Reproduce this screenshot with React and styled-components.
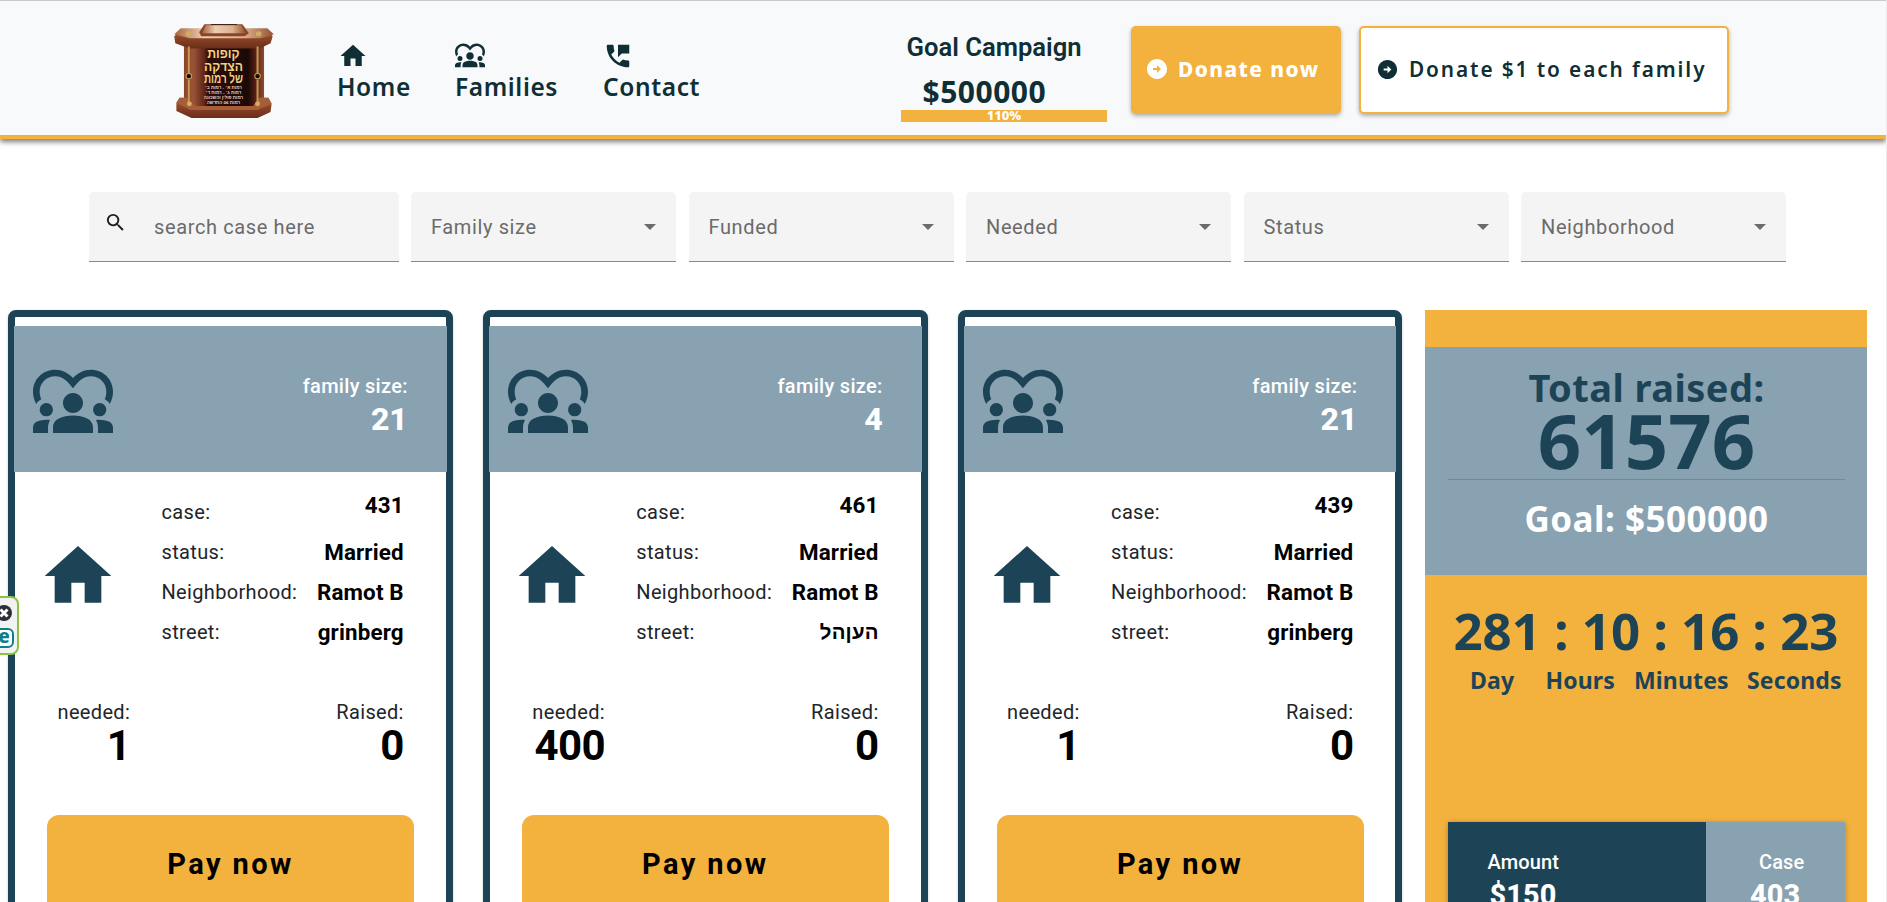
import React from 'react';
import styled, { createGlobalStyle } from 'styled-components';
import { MdHome, MdDiversity1, MdPermPhoneMsg, MdArrowCircleRight, MdSearch } from 'react-icons/md';

const navy = '#1d4456';
const ink = '#0f2f35';
const amber = '#f3b13e';
const slate = '#88a2b1';
const noto = '"Noto Sans", "Open Sans", sans-serif';
const roboto = 'Roboto, "Liberation Sans", sans-serif';

const GlobalStyle = createGlobalStyle`
  * { box-sizing: border-box; }
  body { margin: 0; background: #fff; overflow: hidden; }
  svg { display: block; flex: none; }
`;

const Page = styled.div`
  position: relative;
  height: 902px;
  overflow: hidden;
  border-right: 1px solid #ececec;
  font-family: ${roboto};
  white-space: nowrap;
`;

/* ---------- header ---------- */
const Header = styled.header`
  display: flex;
  align-items: flex-start;
  height: 139px;
  padding-left: 174px;
  background: #f8f9fb;
  border-top: 1px solid #cacbcd;
  border-bottom: 4px solid ${amber};
  box-shadow: 0 3px 5px rgba(0, 0, 0, 0.5);
`;
const LogoBox = styled.div`
  width: 102px;
  margin-top: 23px;
`;
const Nav = styled.nav`
  display: flex;
  margin: 40px 0 0 61px;
  width: 564px;
`;
const NavLink = styled.a`
  display: flex;
  flex-direction: column;
  gap: 2px;
  width: ${(p) => p.$width}px;
  color: ${ink};
  font: 600 24.5px/28px ${noto};
  letter-spacing: 0.6px;
  svg { margin: ${(p) => p.$nudge || '0'}; }
`;
const Goal = styled.section`
  width: 206px;
  margin-top: 31px;
  color: ${ink};
`;
const GoalTitle = styled.div`
  padding-left: 5.5px;
  font: 600 25.6px/31px ${roboto};
`;
const GoalSum = styled.div`
  margin-top: 10px;
  padding-left: 21.5px;
  font: 700 30px/37px ${noto};
  letter-spacing: 0.5px;
`;
const GoalBar = styled.div`
  height: 12px;
  background: ${amber};
  color: #fff;
  text-align: center;
  font: 800 13px/11px ${noto};
`;
const DonateButton = styled.button`
  display: flex;
  align-items: center;
  gap: ${(p) => (p.$outlined ? 10 : 9)}px;
  height: 88px;
  width: ${(p) => p.$width}px;
  margin: 25px 0 0 ${(p) => p.$gap}px;
  padding: 0 0 2px ${(p) => (p.$outlined ? 15 : 12)}px;
  border: 2px solid ${amber};
  border-radius: 5px;
  background: ${(p) => (p.$outlined ? '#fff' : amber)};
  color: ${(p) => (p.$outlined ? ink : '#fff')};
  font: ${(p) => (p.$outlined ? 600 : 800)} 20.8px/28px ${noto};
  letter-spacing: ${(p) => (p.$outlined ? 1.9 : 1.47)}px;
  box-shadow: 0 2px 4px rgba(0, 0, 0, 0.3);
`;

/* ---------- filters ---------- */
const Filters = styled.div`
  display: flex;
  gap: 12.5px;
  margin: 53px 0 0 89px;
`;
const Field = styled.div`
  display: flex;
  align-items: center;
  justify-content: space-between;
  width: 265px;
  height: 70px;
  padding: 0 20px;
  border-radius: 5px 5px 0 0;
  border-bottom: 1px solid #888;
  background: #f4f4f4;
  color: #6b6b6b;
  font: 400 20px/24px ${roboto};
  letter-spacing: 0.03125em;
`;
const SearchField = styled(Field)`
  justify-content: flex-start;
  width: 309.5px;
  padding: 0 15px;
  svg { margin: -9px 27px 0 0; color: #1d1f27; }
`;
const Caret = styled.i`
  border: 6.5px solid transparent;
  border-top-color: #6b6b6b;
  border-bottom: 0;
`;

/* ---------- case cards ---------- */
const Main = styled.main`
  display: flex;
  align-items: flex-start;
  margin-top: 48px;
  padding-left: 8px;
`;
const CardGrid = styled.div`
  display: grid;
  grid-template-columns: repeat(3, 444.8px);
  column-gap: 30px;
  margin-right: 22.6px;
`;
const Card = styled.article`
  height: 640px;
  padding-top: 9px;
  border: 7px solid ${navy};
  border-radius: 8px;
  background: #fff;
  box-shadow: 0 1px 3px rgba(0, 0, 0, 0.2);
`;
const CardHead = styled.div`
  display: flex;
  align-items: flex-start;
  justify-content: space-between;
  height: 146px;
  margin: 0 -1px;
  padding: 34px 39px 0 19px;
  background: ${slate};
  color: ${navy};
  svg { margin-top: 3px; }
`;
const FamilySize = styled.div`
  margin-top: 14px;
  text-align: right;
  color: #fff;
  font: 500 20px/24px ${roboto};
  letter-spacing: 0.3px;
`;
const FamilyCount = styled.div`
  margin-top: 1px;
  letter-spacing: 0;
  font: 800 32px/40px ${roboto};
`;
const CardBody = styled.div`
  display: flex;
  align-items: flex-start;
  padding: 20px 42px 0 22.5px;
  color: ${navy};
  svg { margin-top: 44px; }
`;
const Facts = styled.dl`
  flex: 1;
  margin: 0 0 0 44px;
`;
const Fact = styled.div`
  display: flex;
  justify-content: space-between;
  align-items: center;
  height: 40px;
`;
const Label = styled.dt`
  color: #212529;
  font: 400 20px/24px ${roboto};
  letter-spacing: 0.34px;
`;
const Value = styled.dd`
  margin: 0 0 ${(p) => (p.$raised ? 14 : 0)}px;
  color: #000;
  font: 700 22.4px/26px ${roboto};
  letter-spacing: 0.15px;
  &:lang(he) { font-size: 20.4px; }
`;
const Sums = styled.div`
  display: flex;
  justify-content: space-between;
  margin-top: 48px;
  padding: 0 42px 0 42.5px;
`;
const Sum = styled.div`
  display: flex;
  flex-direction: column;
  align-items: flex-end;
`;
const SumValue = styled.div`
  color: #000;
  font: 700 42px/43px ${roboto};
  letter-spacing: -0.6px;
`;
const PayButton = styled.button`
  display: block;
  width: 367px;
  height: 98px;
  margin: 48px 0 0 32px;
  padding: 0;
  border: 0;
  border-radius: 12px;
  background: ${amber};
  color: #000;
  font: 700 29px/36px ${roboto};
  letter-spacing: 2.4px;
`;

/* ---------- campaign sidebar ---------- */
const Sidebar = styled.aside`
  width: 442px;
  height: 640px;
  padding-top: 37px;
  background: ${amber};
  color: ${navy};
  font-family: ${noto};
  text-align: center;
`;
const Totals = styled.div`
  height: 228px;
  padding: 20px 22px 0 23px;
  background: ${slate};
`;
const TotalTitle = styled.div`
  margin-bottom: 1px;
  font: 700 38px/40px ${noto};
  letter-spacing: 0.45px;
`;
const TotalValue = styled.div`
  padding-bottom: 7px;
  border-bottom: 1px solid #6e8b99;
  font: 700 76px/64px ${noto};
`;
const TotalGoal = styled.div`
  margin-top: 17px;
  color: #fff;
  font: 700 35px/44px ${noto};
  letter-spacing: 0.5px;
`;
const Countdown = styled.div`
  margin-top: 25px;
  font: 700 51px/60px ${noto};
`;
const Units = styled.div`
  display: grid;
  grid-template-columns: 75.5px 88.5px 113px auto;
  justify-content: start;
  margin-top: 6px;
  padding-left: 45px;
  text-align: left;
  font: 700 23px/28px ${noto};
  letter-spacing: 0.15px;
`;
const Ledger = styled.div`
  display: flex;
  height: 160px;
  margin: 128px 22px 0 23px;
  color: #fff;
  box-shadow: 0 1px 5px rgba(0, 0, 0, 0.3);
`;
const LedgerCell = styled.div`
  width: ${(p) => p.$width}px;
  padding: 28px 0 0 ${(p) => p.$pad}px;
  background: ${(p) => p.$bg};
  text-align: left;
  font: 500 20px/24px ${roboto};
  letter-spacing: 0.15px;
`;
const LedgerValue = styled.div`
  margin: 3px 0 0 ${(p) => p.$shift}px;
  font: 800 28.8px/36px ${roboto};
`;

/* ---------- accessibility tab ---------- */
const SideTab = styled.div`
  position: absolute;
  left: -20px;
  top: 596px;
  width: 39px;
  height: 59px;
  display: flex;
  flex-direction: column;
  align-items: flex-end;
  gap: 7px;
  padding: 7px 3px 0 0;
  border: 2px solid #8bc53f;
  border-radius: 8px;
  background: #f2f2f2;
`;
const TabClose = styled.svg`
  margin-right: 2px;
`;
const TabLetter = styled.span`
  width: 20px;
  height: 20px;
  border: 2px solid #0d7f8b;
  border-radius: 6px;
  background: #fff;
  color: #0d7f8b;
  text-align: center;
  font: 800 19px/12px ${noto};
`;

function Logo() {
  return (
    <svg width="100" height="95" viewBox="1.8 1.800 92.400 94.200" preserveAspectRatio="none">
      <defs>
        <linearGradient id="wood" x1="0" y1="0" x2="0" y2="1">
          <stop offset="0" stopColor="#b06a42" />
          <stop offset="0.45" stopColor="#8a4326" />
          <stop offset="1" stopColor="#6a2d1a" />
        </linearGradient>
        <linearGradient id="body" x1="0" y1="0" x2="1" y2="0">
          <stop offset="0" stopColor="#8a452c" />
          <stop offset="0.12" stopColor="#9a5336" />
          <stop offset="0.26" stopColor="#5c2316" />
          <stop offset="0.3" stopColor="#2c0d08" />
          <stop offset="0.8" stopColor="#1b0906" />
          <stop offset="0.88" stopColor="#4e1c12" />
          <stop offset="1" stopColor="#8f4a30" />
        </linearGradient>
        <linearGradient id="lid" x1="0" y1="0" x2="1" y2="0">
          <stop offset="0" stopColor="#a86440" />
          <stop offset="0.3" stopColor="#ecceb4" />
          <stop offset="0.7" stopColor="#dcb08f" />
          <stop offset="1" stopColor="#94502f" />
        </linearGradient>
      </defs>
      <path d="M11 22h74v62H11z" fill="url(#body)" />
      <path d="M8 8h80l5 6-2 7-10 5H16L3 21 2 14z" fill="url(#wood)" />
      <path d="M8 6h80l6 6-12 4H16L2 12z" fill="url(#lid)" />
      <path d="M30 2h35l6 9-4 3H27l-2-4z" fill="#8a4527" />
      <path d="M31 3h33l4 8H28z" fill="url(#lid)" />
      <path d="M36 2h24" stroke="#2a120a" strokeWidth="1.2" />
      <path d="M7 75h6l9 8h53l6-8h8l3 6-1 8-12 6H18L4 88V80z" fill="url(#wood)" />
      <path d="M7 75h6l9 8h53l6-8h8l3 6-13 6H17L4 80z" fill="#a65e39" />
      <path d="M15.500 24v27M15.500 57v23M79 24v27M79 57v23" stroke="#c79a50" strokeWidth="1.8" fill="none" />
      <g fill="#130b08" stroke="#c9a25b" strokeWidth="1">
        <circle cx="15.500" cy="53.500" r="2.600" />
        <circle cx="79" cy="53.500" r="2.600" />
      </g>
      <g fill="#d2ac63">
        <circle cx="15" cy="11.500" r="2.600" />
        <circle cx="80" cy="11.500" r="2.600" />
        <circle cx="16" cy="81" r="2.300" />
        <circle cx="79" cy="81" r="2.300" />
      </g>
      <g fill="#f2cf85" fontFamily='"Liberation Sans", sans-serif' fontWeight="700" textAnchor="middle">
        <text x="47.500" y="35.500" fontSize="13.500" textLength="30" lengthAdjust="spacingAndGlyphs">קופות</text>
        <text x="47.500" y="48" fontSize="13.500" textLength="36" lengthAdjust="spacingAndGlyphs">הצדקה</text>
        <text x="47.500" y="60.500" fontSize="13.500" textLength="36" lengthAdjust="spacingAndGlyphs">של רמות</text>
        <g fill="#e6d6cb" fontSize="4.200">
          <text x="47.500" y="66.500">רמות א׳ - רמות ב׳</text>
          <text x="47.500" y="71.300">רמות ג׳ - רמות ד׳</text>
          <text x="47.500" y="76.300">רמות פולין והשכונה</text>
          <text x="47.500" y="81.200">רמות 06 החדשה</text>
        </g>
      </g>
    </svg>
  );
}

const cases = [
  { size: 21, id: 431, street: 'grinberg', lang: 'en', needed: 1 },
  { size: 4, id: 461, street: 'העןהל', lang: 'he', needed: 400 },
  { size: 21, id: 439, street: 'grinberg', lang: 'en', needed: 1 },
];

function CaseCard({ item }) {
  return (
    <Card>
      <CardHead>
        <MdDiversity1 size={80} />
        <FamilySize>
          family size:
          <FamilyCount>{item.size}</FamilyCount>
        </FamilySize>
      </CardHead>
      <CardBody>
        <MdHome size={80} />
        <Facts>
          <Fact><Label>case:</Label><Value $raised>{item.id}</Value></Fact>
          <Fact><Label>status:</Label><Value>Married</Value></Fact>
          <Fact><Label>Neighborhood:</Label><Value>Ramot B</Value></Fact>
          <Fact><Label>street:</Label><Value lang={item.lang}>{item.street}</Value></Fact>
        </Facts>
      </CardBody>
      <Sums>
        <Sum><Label as="div">needed:</Label><SumValue>{item.needed}</SumValue></Sum>
        <Sum><Label as="div">Raised:</Label><SumValue>0</SumValue></Sum>
      </Sums>
      <PayButton>Pay now</PayButton>
    </Card>
  );
}

export default function App() {
  return (
    <Page>
      <GlobalStyle />
      <Header>
        <LogoBox><Logo /></LogoBox>
        <Nav>
          <NavLink $width={118} $nudge="0 0 0 1px"><MdHome size={30} />Home</NavLink>
          <NavLink $width={148}><MdDiversity1 size={30} />Families</NavLink>
          <NavLink $width={140}><MdPermPhoneMsg size={30} />Contact</NavLink>
        </Nav>
        <Goal>
          <GoalTitle>Goal Campaign</GoalTitle>
          <GoalSum>$500000</GoalSum>
          <GoalBar>110%</GoalBar>
        </Goal>
        <DonateButton $width={210} $gap={24}><MdArrowCircleRight size={24} />Donate now</DonateButton>
        <DonateButton $outlined $width={370} $gap={18}><MdArrowCircleRight size={23} />Donate $1 to each family</DonateButton>
      </Header>

      <Filters>
        <SearchField><MdSearch size={23} />search case here</SearchField>
        {['Family size', 'Funded', 'Needed', 'Status', 'Neighborhood'].map((name) => (
          <Field key={name}>{name}<Caret /></Field>
        ))}
      </Filters>

      <Main>
        <CardGrid>
          {cases.map((item) => <CaseCard key={item.id} item={item} />)}
        </CardGrid>
        <Sidebar>
          <Totals>
            <TotalTitle>Total raised:</TotalTitle>
            <TotalValue>61576</TotalValue>
            <TotalGoal>Goal: $500000</TotalGoal>
          </Totals>
          <Countdown>281 : 10 : 16 : 23</Countdown>
          <Units><span>Day</span><span>Hours</span><span>Minutes</span><span>Seconds</span></Units>
          <Ledger>
            <LedgerCell $width={258} $pad={39.5} $bg={navy}>
              Amount<LedgerValue $shift={2}>$150</LedgerValue>
            </LedgerCell>
            <LedgerCell $width={139} $pad={53} $bg={slate}>
              Case<LedgerValue $shift={-9}>403</LedgerValue>
            </LedgerCell>
          </Ledger>
        </Sidebar>
      </Main>

      <SideTab>
        <TabClose width="16" height="16" viewBox="0 0 16 16">
          <circle cx="8" cy="8" r="8" fill="#2b2f38" />
          <path d="M4.500 4.500l7 7M11.500 4.500l-7 7" stroke="#fff" strokeWidth="3" />
        </TabClose>
        <TabLetter>e</TabLetter>
      </SideTab>
    </Page>
  );
}
